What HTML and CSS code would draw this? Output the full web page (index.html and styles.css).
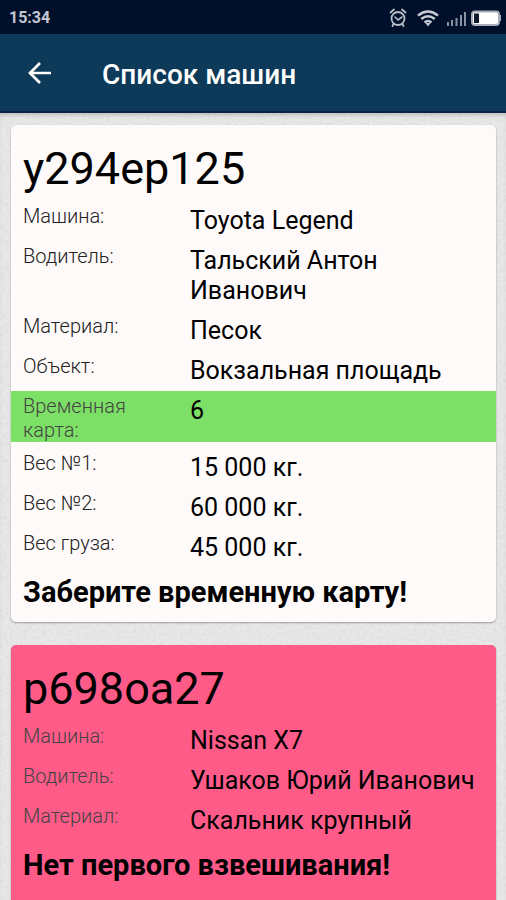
FILE: index.html
```html
<!DOCTYPE html>
<html lang="ru">
<head>
<meta charset="utf-8">
<meta name="viewport" content="width=device-width, initial-scale=1">
<title>Список машин</title>
<link rel="stylesheet" href="styles.css">
</head>
<body>
<div class="status">
  <span class="clock">15:34</span>
  <svg class="status-icons" viewBox="0 0 114 24" aria-hidden="true">
    <g fill="none" stroke="#b9bdca" stroke-width="1.8" stroke-linecap="round">
      <circle cx="10" cy="12.500" r="6.500"/>
      <path d="M7 11l3 3 4-3" stroke-width="1.6"/>
      <path d="M2.500 6.500l3.500-3M17.500 6.500l-3.500-3M5.500 18l-1 2M14.500 18l1 2"/>
    </g>
    <g fill="none" stroke="#c9ccd6" stroke-width="2.4">
      <path d="M30 9.500q10-8 20 0M33.300 13q6.700-5.500 13.400 0M36.500 16.500q3.500-3 7 0"/>
    </g>
    <path d="M37.500 17h5L40 20.500z" fill="#c9ccd6"/>
    <path d="M59 16h2v4h-2zM63 14h2v6h-2zM67.500 12h2v8h-2zM72 9h2v11h-2zM76 6h2v14h-2z" fill="#8d92a2"/>
    <rect x="84" y="5.500" width="27" height="13.500" rx="3" fill="#fff" stroke="#a9adba" stroke-width="2"/>
    <path d="M86 7.500h5v9.500h-5z" fill="#10182d"/>
    <path d="M112 9h1v6h-1z" fill="#a9adba"/>
  </svg>
</div>
<header class="bar">
  <button class="back" type="button" aria-label="Назад">
    <svg viewBox="0 0 28 24" aria-hidden="true"><path d="M25 12H3M14 2L4 12l10 10" fill="none" stroke="#fff" stroke-width="2.700"/></svg>
  </button>
  <h1>Список машин</h1>
</header>
<main class="list">
  <svg class="paper" aria-hidden="true">
    <filter id="grain"><feTurbulence type="fractalNoise" baseFrequency="0.3" numOctaves="3"/><feColorMatrix values="0 0 0 0 0.4  0 0 0 0 0.4  0 0 0 0 0.4  0.3 0 0 0 -0.11"/></filter>
    <rect width="100%" height="100%" filter="url(#grain)"/>
  </svg>
  <article class="card">
    <h2>у294ер125</h2>
    <dl>
      <div class="row"><dt>Машина:</dt><dd>Toyota Legend</dd></div>
      <div class="row"><dt>Водитель:</dt><dd>Тальский Антон Иванович</dd></div>
      <div class="row"><dt>Материал:</dt><dd>Песок</dd></div>
      <div class="row"><dt>Объект:</dt><dd>Вокзальная площадь</dd></div>
      <div class="row marked"><dt>Временная карта:</dt><dd>6</dd></div>
      <div class="row"><dt>Вес №1:</dt><dd>15 000 кг.</dd></div>
      <div class="row"><dt>Вес №2:</dt><dd>60 000 кг.</dd></div>
      <div class="row"><dt>Вес груза:</dt><dd>45 000 кг.</dd></div>
    </dl>
    <p class="note">Заберите временную карту!</p>
  </article>
  <article class="card alert">
    <h2>р698оа27</h2>
    <dl>
      <div class="row"><dt>Машина:</dt><dd>Nissan X7</dd></div>
      <div class="row"><dt>Водитель:</dt><dd>Ушаков Юрий Иванович</dd></div>
      <div class="row"><dt>Материал:</dt><dd>Скальник крупный</dd></div>
    </dl>
    <p class="note">Нет первого взвешивания!</p>
  </article>
</main>
</body>
</html>
```
FILE: styles.css
```css
* { box-sizing: border-box; }
body {
  margin: 0;
  height: 100vh;
  overflow: hidden;
  display: flex;
  flex-direction: column;
  background: #e8e8e8;
  color: #000;
  font-family: Roboto, "Liberation Sans", sans-serif;
}
h1, h2, dl, dd, p { margin: 0; }
.status {
  flex: none;
  display: flex;
  align-items: center;
  justify-content: space-between;
  height: 34px;
  padding: 2px 4px 0 9px;
  background: #01102a;
}
.clock { font-size: 16px; font-weight: 700; line-height: 20px; color: #c4c7d1; }
.status-icons { width: 114px; height: 24px; }
.bar {
  flex: none;
  display: flex;
  align-items: center;
  gap: 48px;
  height: 79px;
  padding: 0 26px;
  background: #0d3a58;
  border-bottom: 2px solid #092449;
}
.back { display: flex; padding: 0; border: 0; background: none; }
.back svg { width: 28px; height: 24px; }
h1 { padding-top: 4px; font-size: 28px; font-weight: 500; line-height: 32px; color: #fff; }
.list {
  position: relative;
  flex: 1;
  min-height: 0;
  overflow: hidden;
  padding: 12px 10px 0 11px;
  box-shadow: inset 0 4px 4px -2px #bbb;
}
.paper { position: absolute; inset: 0; width: 100%; height: 100%; }
.card {
  position: relative;
  overflow: hidden;
  margin-bottom: 23px;
  padding: 12px 0;
  border-radius: 5px;
  background: #fffafa;
  box-shadow: 0 1px 2px #999;
}
.alert { padding-bottom: 32px; background: #ff5b89; }
h2 { padding: 0 12px 1px; font-size: 45px; font-weight: 400; line-height: 63px; }
.row {
  display: grid;
  grid-template-columns: 143px 1fr;
  gap: 24px;
  margin-bottom: 5px;
  padding: 3px 12px 0;
}
.marked { margin-bottom: 6px; background: #7de066; }
dt { font-size: 20px; font-weight: 300; line-height: 24px; color: #222; }
.marked dt, .alert dt { color: #444; }
dd { padding-top: 2px; font-size: 25px; line-height: 30px; }
.note { padding: 8px 12px 2px; font-size: 29px; font-weight: 700; line-height: 32px; }
```
